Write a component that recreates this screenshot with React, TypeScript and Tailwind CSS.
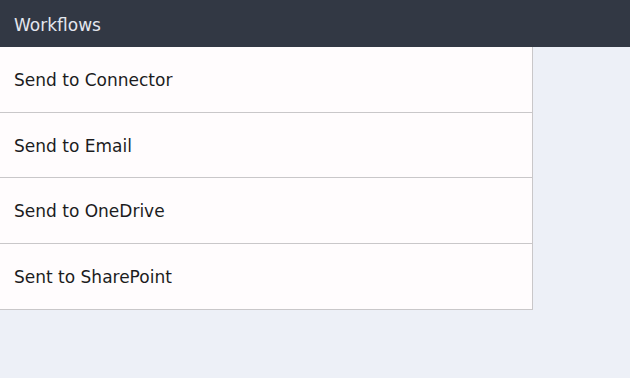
import React from "react";

const workflows = ["Send to Connector", "Send to Email", "Send to OneDrive", "Sent to SharePoint"];

export default function App() {
    return (
        <div className="w-[630px] h-[378px] bg-[#edf0f7] flex flex-col overflow-hidden" style={{ fontFamily: '"DejaVu Sans", sans-serif' }}>
            <div className="h-[47px] bg-[#323844] flex items-center px-[14px] pt-[4px]">
                <span className="text-[17px] text-[#e3e6ee]">Workflows</span>
            </div>
            <div className="w-[533px] bg-[#fffcfd] border-r border-b border-[#c9c7c9]">
                {workflows.map((name, i) => (
                    <div
                        key={name}
                        className={
                            i < workflows.length - 1
                                ? "h-[65.5px] flex items-center px-[14px] pt-[3px] border-b border-[#c9c7c9]"
                                : "h-[65.5px] flex items-center px-[14px] pt-[3px]"
                        }
                    >
                        <span className="text-[17px] text-[#1c1c1e]">{name}</span>
                    </div>
                ))}
            </div>
        </div>
    );
}
